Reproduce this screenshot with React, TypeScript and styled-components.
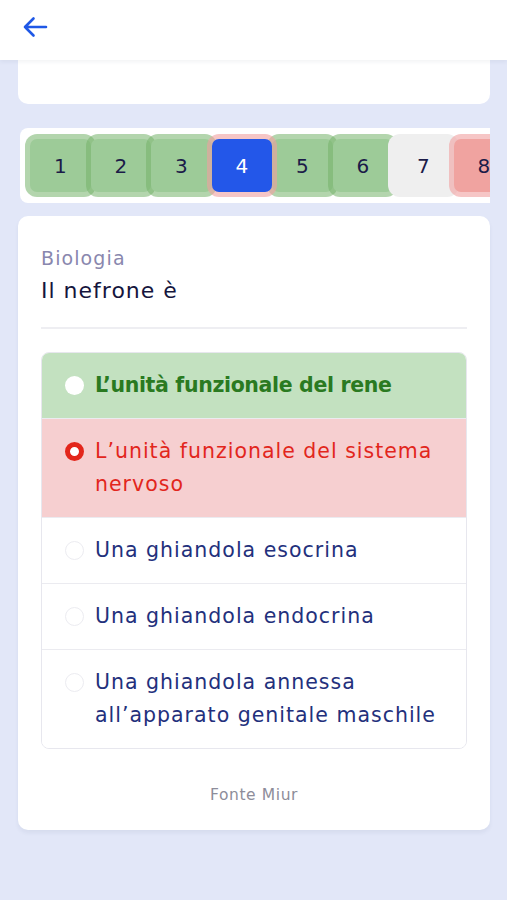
import React from 'react';
import styled, { createGlobalStyle } from 'styled-components';

const GlobalStyle = createGlobalStyle`
    html, body {
        margin: 0;
        padding: 0;
        background: #e2e7f8;
    }
    body {
        font-family: 'DejaVu Sans', 'Open Sans', sans-serif;
    }
`;

const Page = styled.div`
    min-height: 900px;
    background: #e2e7f8;
`;

const Header = styled.header`
    position: sticky;
    top: 0;
    z-index: 2;
    height: 60px;
    display: flex;
    align-items: center;
    padding-left: 22px;
    background: #ffffff;
    box-shadow: 0 2px 4px rgba(40, 50, 90, 0.06);
`;

const BackButton = styled.button`
    display: flex;
    padding: 0;
    border: none;
    background: none;
    cursor: pointer;
    margin-top: -7px;
`;

const Body = styled.main`
    display: flex;
    flex-direction: column;
    padding: 0 17px 0 18px;
`;

const Card = styled.section`
    background: #ffffff;
    border-radius: 10px;
`;

const InfoCard = styled(Card)`
    position: relative;
    z-index: 1;
    height: 84px;
    margin-top: -40px;
    display: flex;
    justify-content: flex-end;
    padding-right: 95px;
`;

const InfoLabel = styled.span`
    margin-top: 25px;
    font-size: 15px;
    line-height: 19px;
    color: #9a9aa8;
`;

const Strip = styled(Card)`
    display: flex;
    margin: 24px 0 0 2px;
    padding: 11px 0 11px 10px;
    border-radius: 8px 0 0 8px;
    overflow: hidden;
`;

type CellState = 'right' | 'wrong' | 'current' | 'empty';

const cellFill: Record<CellState, string> = {
    right: '#9dcb98',
    wrong: '#f0a3a0',
    current: '#2357e9',
    empty: '#efefef'
};

const cellRing: Record<CellState, string> = {
    right: 'rgba(116, 178, 106, 0.55)',
    wrong: 'rgba(240, 160, 160, 0.6)',
    current: 'rgba(240, 160, 160, 0.6)',
    empty: '#efefef'
};

const Cell = styled.div<{ $state: CellState }>`
    flex: 0 0 60.5px;
    height: 53px;
    display: flex;
    align-items: center;
    justify-content: center;
    border-radius: 7px;
    background: ${p => cellFill[p.$state]};
    box-shadow: 0 0 0 5px ${p => cellRing[p.$state]};
    font-size: 20px;
    color: ${p => (p.$state === 'current' ? '#ffffff' : '#1b1b48')};
    ${p => p.$state === 'current' && 'z-index: 1;'}
`;

const QuestionCard = styled(Card)`
    margin-top: 13px;
    padding: 29px 23px 0 23px;
    display: flex;
    flex-direction: column;
    box-shadow: 0 3px 4px rgba(40, 50, 90, 0.06);
`;

const Subject = styled.div`
    font-size: 19px;
    line-height: 26px;
    letter-spacing: 1.1px;
    color: #8987ae;
`;

const Question = styled.h1`
    margin: 5px 0 0;
    font-size: 22px;
    line-height: 30px;
    font-weight: 400;
    letter-spacing: 1px;
    color: #15153d;
`;

const Divider = styled.hr`
    margin: 21px 0 0;
    border: none;
    border-top: 2px solid #eeeef2;
`;

const Options = styled.ul`
    list-style: none;
    margin: 23px 0 0;
    padding: 0;
    border: 1px solid #e7e7ee;
    border-radius: 8px;
    overflow: hidden;
`;

type OptionState = 'correct' | 'wrong' | 'plain';

const Option = styled.li<{ $state: OptionState }>`
    display: flex;
    align-items: flex-start;
    gap: 11px;
    padding: 16px 16px 16px 23px;
    background: ${p =>
        p.$state === 'correct'
            ? '#c3e1c0'
            : p.$state === 'wrong'
            ? '#f6cfd0'
            : '#ffffff'};
    & + & {
        border-top: 1px solid #ebebf0;
    }
`;

const Radio = styled.span<{ $state: OptionState }>`
    flex: 0 0 auto;
    box-sizing: border-box;
    width: 19px;
    height: 19px;
    margin-top: 7px;
    border-radius: 50%;
    background: #ffffff;
    border: ${p =>
        p.$state === 'wrong'
            ? '5px solid #e3261b'
            : p.$state === 'correct'
            ? 'none'
            : '1.5px solid #ececf1'};
`;

const OptionText = styled.span<{ $state: OptionState }>`
    font-size: 20.5px;
    line-height: 33px;
    letter-spacing: ${p => (p.$state === 'correct' ? '-0.35px' : '1px')};
    font-weight: ${p => (p.$state === 'correct' ? 700 : 400)};
    color: ${p =>
        p.$state === 'correct'
            ? '#2a7a21'
            : p.$state === 'wrong'
            ? '#e2261c'
            : '#23307c'};
`;

const Source = styled.footer`
    padding: 36px 0 25px;
    text-align: center;
    font-size: 15.5px;
    line-height: 20px;
    letter-spacing: 0.6px;
    color: #8d8d9a;
`;

const BackArrow = () => (
    <svg width="26" height="22" viewBox="0 0 26 22" fill="none">
        <path
            d="M24 11H3M11.5 2.5 3 11l8.5 8.5"
            stroke="#1f58e6"
            strokeWidth="2.6"
            strokeLinecap="round"
            strokeLinejoin="round"
        />
    </svg>
);

const cells: { n: number; state: CellState }[] = [
    { n: 1, state: 'right' },
    { n: 2, state: 'right' },
    { n: 3, state: 'right' },
    { n: 4, state: 'current' },
    { n: 5, state: 'right' },
    { n: 6, state: 'right' },
    { n: 7, state: 'empty' },
    { n: 8, state: 'wrong' }
];

const answers: { text: string; state: OptionState }[] = [
    { text: 'L’unità funzionale del rene', state: 'correct' },
    { text: 'L’unità funzionale del sistema nervoso', state: 'wrong' },
    { text: 'Una ghiandola esocrina', state: 'plain' },
    { text: 'Una ghiandola endocrina', state: 'plain' },
    { text: 'Una ghiandola annessa all’apparato genitale maschile', state: 'plain' }
];

const App = () => {
    return (
        <>
            <GlobalStyle />
            <Page>
                <Header>
                    <BackButton aria-label="Indietro">
                        <BackArrow />
                    </BackButton>
                </Header>

                <Body>
                    <InfoCard>
                        <InfoLabel>Finalità</InfoLabel>
                    </InfoCard>

                    <Strip>
                        {cells.map(c => (
                            <Cell key={c.n} $state={c.state}>
                                {c.n}
                            </Cell>
                        ))}
                    </Strip>

                    <QuestionCard>
                        <Subject>Biologia</Subject>
                        <Question>Il nefrone è</Question>
                        <Divider />

                        <Options>
                            {answers.map(a => (
                                <Option key={a.text} $state={a.state}>
                                    <Radio $state={a.state} />
                                    <OptionText $state={a.state}>
                                        {a.text}
                                    </OptionText>
                                </Option>
                            ))}
                        </Options>

                        <Source>Fonte Miur</Source>
                    </QuestionCard>
                </Body>
            </Page>
        </>
    );
};

export default App;
